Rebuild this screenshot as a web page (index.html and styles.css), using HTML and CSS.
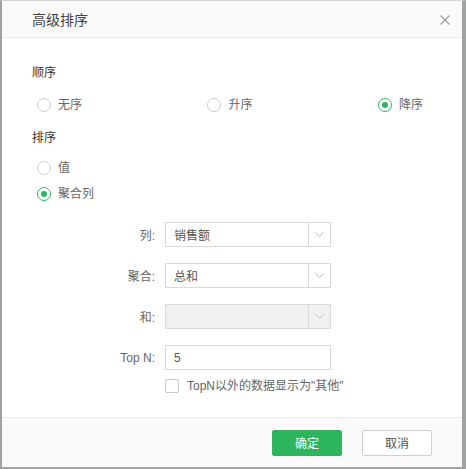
FILE: index.html
```html
<!DOCTYPE html>
<html lang="zh">
<head>
  <meta charset="UTF-8">
  <title>高级排序</title>
  <link rel="stylesheet" href="styles.css">
</head>
<body>
  <div class="dialog">
    <div class="dialog-header">
      <span class="dialog-title">高级排序</span>
      <span class="close-btn">
        <svg width="10" height="10" viewBox="0 0 10 10"><path d="M0.5 0.5L9.5 9.5M9.5 0.5L0.5 9.5" stroke="#999" stroke-width="1.1" fill="none"/></svg>
      </span>
    </div>

    <div class="dialog-body">
      <div class="section-title">顺序</div>
      <div class="radio-row spread">
        <label class="radio"><span class="radio-dot"></span>无序</label>
        <label class="radio"><span class="radio-dot"></span>升序</label>
        <label class="radio checked"><span class="radio-dot"></span>降序</label>
      </div>

      <div class="section-title second">排序</div>
      <div class="radio-col">
        <label class="radio"><span class="radio-dot"></span>值</label>
        <label class="radio checked"><span class="radio-dot"></span>聚合列</label>
      </div>

      <div class="form-grid">
        <div class="form-label">列:</div>
        <div class="select">
          <span class="select-text">销售额</span>
          <span class="select-arrow"><svg width="9" height="5" viewBox="0 0 9 5"><path d="M0.5 0.5L4.5 4.5L8.5 0.5" stroke="#bbb" fill="none"/></svg></span>
        </div>

        <div class="form-label">聚合:</div>
        <div class="select">
          <span class="select-text">总和</span>
          <span class="select-arrow"><svg width="9" height="5" viewBox="0 0 9 5"><path d="M0.5 0.5L4.5 4.5L8.5 0.5" stroke="#bbb" fill="none"/></svg></span>
        </div>

        <div class="form-label">和:</div>
        <div class="select disabled">
          <span class="select-text"></span>
          <span class="select-arrow"><svg width="9" height="5" viewBox="0 0 9 5"><path d="M0.5 0.5L4.5 4.5L8.5 0.5" stroke="#c4c4c4" fill="none"/></svg></span>
        </div>

        <div class="form-label">Top N:</div>
        <div class="text-input">5</div>

        <div></div>
        <label class="check"><span class="check-box"></span>TopN以外的数据显示为"其他"</label>
      </div>
    </div>

    <div class="dialog-footer">
      <button class="btn btn-primary">确定</button>
      <button class="btn">取消</button>
    </div>
  </div>
</body>
</html>
```

FILE: styles.css
```css
body {
  margin: 0;
  font-family: "Liberation Sans", "Noto Sans CJK SC", sans-serif;
  font-size: 12px;
  color: #666;
}

.dialog {
  width: 466px;
  height: 469px;
  box-sizing: border-box;
  border-top: 1px solid #d6d8d8;
  border-left: 2px solid #9ea2a2;
  border-right: 4px solid #9ea2a2;
  border-bottom: 2px solid #9ea2a2;
  display: flex;
  flex-direction: column;
  background: #fff;
}

.dialog-header {
  height: 36px;
  background: #fafafa;
  border-bottom: 1px solid #e8e8e8;
  display: flex;
  align-items: center;
  justify-content: space-between;
  padding: 0 12px 0 30px;
}

.dialog-title {
  font-size: 14px;
  color: #444;
}

.close-btn {
  display: flex;
  margin-top: 1px;
}

.dialog-body {
  flex: 1;
  padding: 25px 0 0 30px;
}

.section-title {
  line-height: 20px;
  color: #333;
}

.section-title.second {
  margin-top: 13px;
}

.radio {
  display: flex;
  align-items: center;
  line-height: 20px;
  color: #666;
}

.radio-dot {
  flex-shrink: 0;
  width: 12px;
  height: 12px;
  border: 1px solid #cfcfcf;
  border-radius: 50%;
  margin-right: 7px;
  display: flex;
  align-items: center;
  justify-content: center;
}

.radio.checked .radio-dot {
  border-color: #2db55d;
}

.radio.checked .radio-dot::after {
  content: "";
  width: 6px;
  height: 6px;
  border-radius: 50%;
  background: #2db55d;
}

.radio-row {
  margin-top: 12px;
  padding-left: 5px;
}

.spread {
  display: flex;
  justify-content: space-between;
  width: 386px;
}

.radio-col {
  margin-top: 10px;
  padding-left: 5px;
  display: flex;
  flex-direction: column;
  gap: 6px;
}

.form-grid {
  margin-top: 18px;
  display: grid;
  grid-template-columns: 123px 166px;
  column-gap: 10px;
  row-gap: 16px;
  align-items: center;
}

.form-label {
  text-align: right;
  color: #666;
}

.select,
.text-input {
  height: 25px;
  box-sizing: border-box;
  border: 1px solid #d9d9d9;
  display: flex;
  align-items: center;
  color: #555;
}

.select-text {
  flex: 1;
  padding-left: 8px;
}

.select-arrow {
  width: 21px;
  height: 100%;
  border-left: 1px solid #d9d9d9;
  display: flex;
  align-items: center;
  justify-content: center;
}

.select.disabled {
  background: #f0f0f0;
}

.text-input {
  padding-left: 8px;
}

.check {
  grid-column: 2;
  display: flex;
  align-items: center;
  line-height: 16px;
  margin-top: -8px;
  white-space: nowrap;
  color: #666;
}

.check-box {
  flex-shrink: 0;
  width: 12px;
  height: 12px;
  border: 1px solid #c8c8c8;
  border-radius: 2px;
  margin-right: 8px;
}

.dialog-footer {
  height: 49px;
  background: #fafafa;
  border-top: 1px solid #e8e8e8;
  display: flex;
  align-items: center;
  justify-content: flex-end;
  gap: 20px;
  padding-right: 30px;
}

.btn {
  width: 70px;
  height: 26px;
  border: 1px solid #d0d0d0;
  border-radius: 2px;
  background: #fff;
  font-family: inherit;
  font-size: 12px;
  color: #555;
  padding: 0;
}

.btn-primary {
  background: #2db55d;
  border-color: #2db55d;
  color: #fff;
}
```
